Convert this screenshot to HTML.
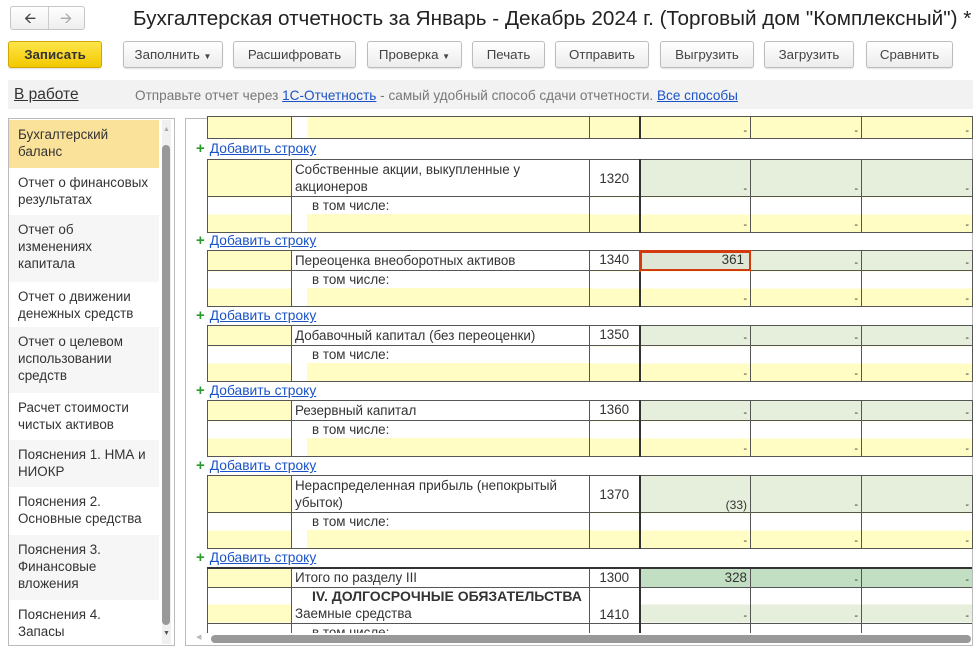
<!DOCTYPE html>
<html><head><meta charset="utf-8">
<style>
*{box-sizing:border-box;margin:0;padding:0}
body{width:976px;height:655px;overflow:hidden;background:#fff;font-family:"Liberation Sans","DejaVu Sans",sans-serif;color:#333;font-size:13px;position:relative}
.a{position:absolute}
.btn{position:absolute;top:41px;height:27px;border:1px solid #bdbdbd;border-radius:3px;background:linear-gradient(#fff,#ececec);text-align:center;line-height:25px;font-size:13.3px;color:#444;box-shadow:0 1px 1px rgba(0,0,0,.12)}
.nav{position:absolute;left:10px;top:6px;width:75px;height:24px;border:1px solid #c6c6c6;border-radius:3px;background:linear-gradient(#fff,#eee)}
.side div{position:absolute;left:9px;width:150px;padding:6px 9px;line-height:17px;font-size:13.4px;color:#333}
.blk{position:absolute;left:207px;border-collapse:collapse;table-layout:fixed;width:765px}
.blk td{border:1px solid #555;padding:0;vertical-align:top;font-size:13.4px;color:#333;line-height:17px;position:relative}
.blk td.d{border-left:2px solid #333}
.y{background:#fffdc4}
.g{background:#e5efdb}
.sub{background:linear-gradient(#fff 0 17px,#fffdc4 17px)}
.subb{background:linear-gradient(#fff 0 17px,#fffdc4 17px);margin-left:15px;height:35px;padding-left:5px}
.m{position:absolute;right:3px;bottom:1px;font-size:11px;line-height:11px}
.code{text-align:center}
.lnk{position:absolute;left:196px;font-size:13.8px;line-height:15px}
.lnk b{color:#2a9a2a;font-size:15px;font-weight:bold;margin-right:5px}
.lnk span{color:#1a53c7;text-decoration:underline}
</style></head><body>
<div class="nav"><span class="a" style="left:13px;top:1px;font-size:15px;color:#444">&#129128;</span><div class="a" style="left:37px;top:0;width:1px;height:22px;background:#ccc"></div><span class="a" style="left:49px;top:1px;font-size:15px;color:#aaa">&#129130;</span></div>
<div class="a" style="left:133px;top:7px;font-size:20.7px;color:#222;white-space:nowrap">Бухгалтерская отчетность за Январь - Декабрь 2024 г. (Торговый дом "Комплексный") *</div>
<div class="btn" style="left:8px;width:94px;background:linear-gradient(#ffe64a,#f2c800);border-color:#d0a800;font-weight:bold;color:#333">Записать</div>
<div class="btn" style="left:123px;width:100px">Заполнить <span style="font-size:8px">▼</span></div>
<div class="btn" style="left:233px;width:123px">Расшифровать</div>
<div class="btn" style="left:367px;width:95px">Проверка <span style="font-size:8px">▼</span></div>
<div class="btn" style="left:472px;width:73px">Печать</div>
<div class="btn" style="left:555px;width:94px">Отправить</div>
<div class="btn" style="left:660px;width:94px">Выгрузить</div>
<div class="btn" style="left:764px;width:90px">Загрузить</div>
<div class="btn" style="left:866px;width:87px">Сравнить</div>
<div class="a" style="left:8px;top:80px;width:965px;height:29px;background:#f2f2f2"></div>
<div class="a" style="left:14px;top:86px;font-size:15.5px;text-decoration:underline;color:#333">В работе</div>
<div class="a" style="left:135px;top:88px;font-size:13.6px;color:#777;white-space:nowrap">Отправьте отчет через <span style="color:#1a53c7;text-decoration:underline">1С-Отчетность</span> - самый удобный способ сдачи отчетности. <span style="color:#1a53c7;text-decoration:underline">Все способы</span></div>
<div class="a" style="left:8px;top:118px;width:167px;height:528px;border:1px solid #bbb"></div>
<div class="a" style="left:185px;top:118px;width:788px;height:528px;border:1px solid #bbb"></div>
<div class="side">
<div style="top:120px;height:48px;background:#fbe29a">Бухгалтерский<br>баланс</div>
<div style="top:168px;height:47px">Отчет о финансовых<br>результатах</div>
<div style="top:215px;height:67px;background:#f6f6f6">Отчет об<br>изменениях<br>капитала</div>
<div style="top:282px;height:45px">Отчет о движении<br>денежных средств</div>
<div style="top:327px;height:66px;background:#f6f6f6">Отчет о целевом<br>использовании<br>средств</div>
<div style="top:393px;height:47px">Расчет стоимости<br>чистых активов</div>
<div style="top:440px;height:47px;background:#f6f6f6">Пояснения 1. НМА и<br>НИОКР</div>
<div style="top:487px;height:48px">Пояснения 2.<br>Основные средства</div>
<div style="top:535px;height:65px;background:#f6f6f6">Пояснения 3.<br>Финансовые<br>вложения</div>
<div style="top:600px;height:45px">Пояснения 4.<br>Запасы</div>
</div>
<div class="a" style="left:162px;top:120px;width:9px;height:524px;background:#f0f0f0"></div>
<div class="a" style="left:162px;top:145px;width:8px;height:480px;background:#999;border-radius:4px"></div>
<div class="a" style="left:163px;top:126px;font-size:7px;color:#aaa">▲</div>
<div class="a" style="left:163px;top:630px;font-size:7px;color:#555">▼</div>

<table class="blk" style="top:116px"><colgroup><col style="width:84px"><col style="width:298px"><col style="width:50px"><col style="width:111px"><col style="width:111px"><col style="width:111px"></colgroup>
<tr style="height:22px"><td class="y"></td><td style="background:linear-gradient(90deg,#fff 15px,#fffdc4 15px)"></td><td class="y"></td><td class="d y"><span class="m">-</span></td><td class="y"><span class="m">-</span></td><td class="y"><span class="m">-</span></td></tr></table>

<div class="lnk" style="top:141px"><b>+</b><span>Добавить строку</span></div>
<table class="blk" style="top:159px"><colgroup><col style="width:84px"><col style="width:298px"><col style="width:50px"><col style="width:111px"><col style="width:111px"><col style="width:111px"></colgroup>
<tr style="height:35px"><td class="y"></td><td style="padding:1px 3px">Собственные акции, выкупленные у акционеров</td><td class="code" style="vertical-align:middle">1320</td><td class="d g"><span class="m">-</span></td><td class="g"><span class="m">-</span></td><td class="g"><span class="m">-</span></td></tr>
<tr style="height:35px"><td class="sub"></td><td><div class="subb">в том числе:</div></td><td class="sub"></td><td class="d sub"><span class="m">-</span></td><td class="sub"><span class="m">-</span></td><td class="sub"><span class="m">-</span></td></tr></table>

<div class="lnk" style="top:233px"><b>+</b><span>Добавить строку</span></div>
<table class="blk" style="top:250px"><colgroup><col style="width:84px"><col style="width:298px"><col style="width:50px"><col style="width:111px"><col style="width:111px"><col style="width:111px"></colgroup>
<tr style="height:20px"><td class="y"></td><td style="padding:1px 3px">Переоценка внеоборотных активов</td><td class="code">1340</td><td class="d" style="background:#dfe6d6;outline:3px solid #d23a10;outline-offset:-2px;text-align:right;padding-right:6px">361</td><td class="g"><span class="m">-</span></td><td class="g"><span class="m">-</span></td></tr>
<tr style="height:36px"><td class="sub"></td><td><div class="subb">в том числе:</div></td><td class="sub"></td><td class="d sub"><span class="m">-</span></td><td class="sub"><span class="m">-</span></td><td class="sub"><span class="m">-</span></td></tr></table>

<div class="lnk" style="top:308px"><b>+</b><span>Добавить строку</span></div>
<table class="blk" style="top:325px"><colgroup><col style="width:84px"><col style="width:298px"><col style="width:50px"><col style="width:111px"><col style="width:111px"><col style="width:111px"></colgroup>
<tr style="height:20px"><td class="y"></td><td style="padding:1px 3px">Добавочный капитал (без переоценки)</td><td class="code">1350</td><td class="d g"><span class="m">-</span></td><td class="g"><span class="m">-</span></td><td class="g"><span class="m">-</span></td></tr>
<tr style="height:36px"><td class="sub"></td><td><div class="subb">в том числе:</div></td><td class="sub"></td><td class="d sub"><span class="m">-</span></td><td class="sub"><span class="m">-</span></td><td class="sub"><span class="m">-</span></td></tr></table>

<div class="lnk" style="top:383px"><b>+</b><span>Добавить строку</span></div>
<table class="blk" style="top:400px"><colgroup><col style="width:84px"><col style="width:298px"><col style="width:50px"><col style="width:111px"><col style="width:111px"><col style="width:111px"></colgroup>
<tr style="height:20px"><td class="y"></td><td style="padding:1px 3px">Резервный капитал</td><td class="code">1360</td><td class="d g"><span class="m">-</span></td><td class="g"><span class="m">-</span></td><td class="g"><span class="m">-</span></td></tr>
<tr style="height:36px"><td class="sub"></td><td><div class="subb">в том числе:</div></td><td class="sub"></td><td class="d sub"><span class="m">-</span></td><td class="sub"><span class="m">-</span></td><td class="sub"><span class="m">-</span></td></tr></table>

<div class="lnk" style="top:458px"><b>+</b><span>Добавить строку</span></div>
<table class="blk" style="top:475px"><colgroup><col style="width:84px"><col style="width:298px"><col style="width:50px"><col style="width:111px"><col style="width:111px"><col style="width:111px"></colgroup>
<tr style="height:36px"><td class="y"></td><td style="padding:1px 3px">Нераспределенная прибыль (непокрытый убыток)</td><td class="code" style="vertical-align:middle">1370</td><td class="d g"><span class="m" style="font-size:12px;line-height:12px">(33)</span></td><td class="g"><span class="m">-</span></td><td class="g"><span class="m">-</span></td></tr>
<tr style="height:36px"><td class="sub"></td><td><div class="subb">в том числе:</div></td><td class="sub"></td><td class="d sub"><span class="m">-</span></td><td class="sub"><span class="m">-</span></td><td class="sub"><span class="m">-</span></td></tr></table>

<div class="lnk" style="top:550px"><b>+</b><span>Добавить строку</span></div>
<div class="a" style="left:186px;top:567px;width:786px;height:66px;overflow:hidden">
<table class="blk" style="top:0;left:21px;border-top:2px solid #333"><colgroup><col style="width:84px"><col style="width:298px"><col style="width:50px"><col style="width:111px"><col style="width:111px"><col style="width:111px"></colgroup>
<tr style="height:19px"><td class="y"></td><td style="padding:0 3px">Итого по разделу III</td><td class="code">1300</td><td class="d" style="background:#c3dfc3;text-align:right;padding-right:3px">328</td><td style="background:#c3dfc3"><span class="m">-</span></td><td style="background:#c3dfc3"><span class="m">-</span></td></tr>
<tr style="height:36px"><td class="sub"></td><td><div style="padding-left:20px;font-weight:bold;font-size:14px">IV. ДОЛГОСРОЧНЫЕ ОБЯЗАТЕЛЬСТВА</div><div style="padding-left:3px">Заемные средства</div></td><td class="code" style="vertical-align:bottom">1410</td><td class="d" style="background:linear-gradient(#fff 0 17px,#e5efdb 17px)"><span class="m">-</span></td><td style="background:linear-gradient(#fff 0 17px,#e5efdb 17px)"><span class="m">-</span></td><td style="background:linear-gradient(#fff 0 17px,#e5efdb 17px)"><span class="m">-</span></td></tr>
<tr style="height:20px"><td></td><td><div style="padding-left:20px">в том числе:</div></td><td></td><td class="d"></td><td></td><td></td></tr></table>
</div>
<div class="a" style="left:186px;top:633px;width:786px;height:12px;background:#fff"></div>
<div class="a" style="left:211px;top:635px;width:760px;height:8px;background:#999;border-radius:4px"></div>
<div class="a" style="left:196px;top:633px;font-size:7px;color:#bbb">◀</div>
</body></html>
